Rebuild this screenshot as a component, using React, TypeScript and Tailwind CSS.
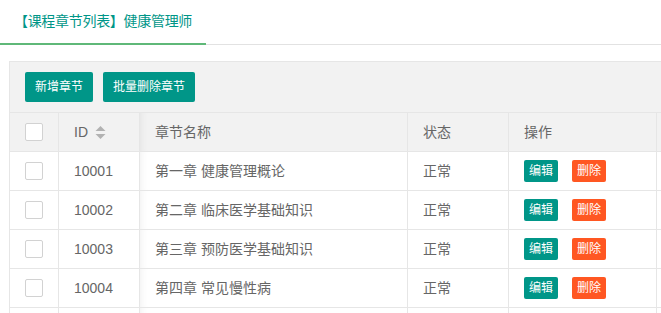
const rows = [
  { id: "10001", name: "第一章 健康管理概论" },
  { id: "10002", name: "第二章 临床医学基础知识" },
  { id: "10003", name: "第三章 预防医学基础知识" },
  { id: "10004", name: "第四章 常见慢性病" },
];

function Checkbox() {
  return <div className="w-[18px] h-[18px] border border-[#d2d2d2] rounded-[2px] bg-white" />;
}

function SortIcon() {
  return (
    <svg width="11" height="13" viewBox="0 0 11 13" className="ml-[7px]">
      <path d="M5.5 0 L10.5 5 L0.5 5 Z" fill="#b2b2b2" />
      <path d="M5.5 13 L10.5 8 L0.5 8 Z" fill="#b2b2b2" />
    </svg>
  );
}

export default function App() {
  return (
    <div
      className="w-[661px] h-[313px] overflow-hidden bg-white text-[#666]"
      style={{ fontFamily: '"Liberation Sans", "Noto Sans CJK SC", sans-serif' }}
    >
      {/* Tab title */}
      <div className="flex border-b border-[#e2e2e2]">
        <div className="w-[206px] h-[45px] -mb-px border-b-2 border-[#5FB878] flex items-center justify-center text-[14px] tracking-[-0.3px] text-[#009688]">
          【课程章节列表】健康管理师
        </div>
      </div>

      {/* Table box */}
      <div className="ml-[9px] mt-4 border-l border-t border-[#e6e6e6]">
        {/* Toolbar */}
        <div className="bg-[#f2f2f2] border-b border-[#e6e6e6] px-[15px] py-[10px] flex gap-[10px]">
          <button className="h-[30px] px-[10px] bg-[#009688] text-white text-[12px] rounded-[2px]">新增章节</button>
          <button className="h-[30px] px-[10px] bg-[#009688] text-white text-[12px] rounded-[2px]">批量删除章节</button>
        </div>

        {/* Header */}
        <div className="flex h-[39px] bg-[#f2f2f2] border-b border-[#e6e6e6] text-[14px]">
          <div className="w-[49px] border-r border-[#e6e6e6] flex items-center justify-center">
            <Checkbox />
          </div>
          <div className="w-[81px] border-r border-[#e6e6e6] flex items-center pl-[15px]">
            ID
            <SortIcon />
          </div>
          <div className="w-[268px] border-r border-[#e6e6e6] flex items-center pl-[15px] shadow-[inset_8px_0_8px_-8px_rgba(0,0,0,0.08)]">
            章节名称
          </div>
          <div className="w-[101px] border-r border-[#e6e6e6] flex items-center pl-[15px]">状态</div>
          <div className="w-[148px] border-r border-[#e6e6e6] flex items-center pl-[15px]">操作</div>
          <div className="flex-1" />
        </div>

        {/* Body */}
        {rows.concat([{ id: "", name: "" }]).map((r, i) => (
          <div key={i} className="flex h-[39px] border-b border-[#e6e6e6] text-[14px]">
            <div className="w-[49px] border-r border-[#e6e6e6] flex items-center justify-center">
              {r.id && <Checkbox />}
            </div>
            <div className="w-[81px] border-r border-[#e6e6e6] flex items-center pl-[15px]">{r.id}</div>
            <div className="w-[268px] border-r border-[#e6e6e6] flex items-center pl-[15px] shadow-[inset_8px_0_8px_-8px_rgba(0,0,0,0.08)]">
              {r.name}
            </div>
            <div className="w-[101px] border-r border-[#e6e6e6] flex items-center pl-[15px]">{r.id && "正常"}</div>
            <div className="w-[148px] border-r border-[#e6e6e6] flex items-center pl-[15px] gap-[14px]">
              {r.id && (
                <>
                  <button className="h-[22px] px-[5px] bg-[#009688] text-white text-[12px] rounded-[2px]">编辑</button>
                  <button className="h-[22px] px-[5px] bg-[#FF5722] text-white text-[12px] rounded-[2px]">删除</button>
                </>
              )}
            </div>
            <div className="flex-1" />
          </div>
        ))}
      </div>
    </div>
  );
}
